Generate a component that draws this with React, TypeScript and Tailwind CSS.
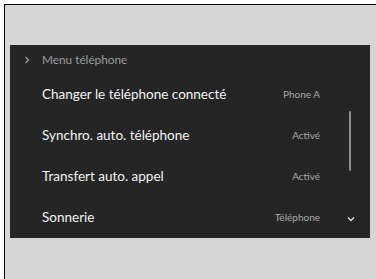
import React from "react";

const rows = [
  { label: "Changer le téléphone connecté", value: "Phone A" },
  { label: "Synchro. auto. téléphone", value: "Activé" },
  { label: "Transfert auto. appel", value: "Activé" },
  { label: "Sonnerie", value: "Téléphone" },
];

export default function App() {
  return (
    <div className="w-[376px] h-[279px] bg-white overflow-hidden" style={{ fontFamily: "Lato, 'Noto Sans', sans-serif" }}>
      <div className="ml-[4px] mt-[4px] w-[372px] h-[275px] border-t border-l border-black bg-[#d5d5d5] pt-[40px] pl-[5px]">
        <div className="relative w-[360px] h-[193px] bg-[#252525]">
          <div className="flex items-center h-[29px] pt-[1px] pl-[14px] text-[11.8px] text-[#9c9c9c]">
            <svg width="6" height="8" viewBox="0 0 6 8" className="mr-[12px]">
              <path d="M1.5 1 L4.5 4 L1.5 7" stroke="#9c9c9c" strokeWidth="1.3" fill="none" />
            </svg>
            <span>Menu téléphone</span>
          </div>
          <div className="flex flex-col">
            {rows.map((r, i) => (
              <div key={i} className="flex items-center h-[41px] pl-[32px] pr-[50px]">
                <span className="text-[13.5px] text-[#f4f4f4] flex-1">{r.label}</span>
                <span className="text-[10px] text-[#a8a8a8]">{r.value}</span>
              </div>
            ))}
          </div>
          <div className="absolute left-[339px] top-[66px] w-[2px] h-[60px] bg-[#8a8a8a] rounded-full" />
          <svg width="10" height="8" viewBox="0 0 10 8" className="absolute left-[336px] top-[170px]">
            <path d="M2 2.5 L5 5.5 L8 2.5" stroke="#e0e0e0" strokeWidth="1.4" fill="none" />
          </svg>
        </div>
      </div>
    </div>
  );
}
